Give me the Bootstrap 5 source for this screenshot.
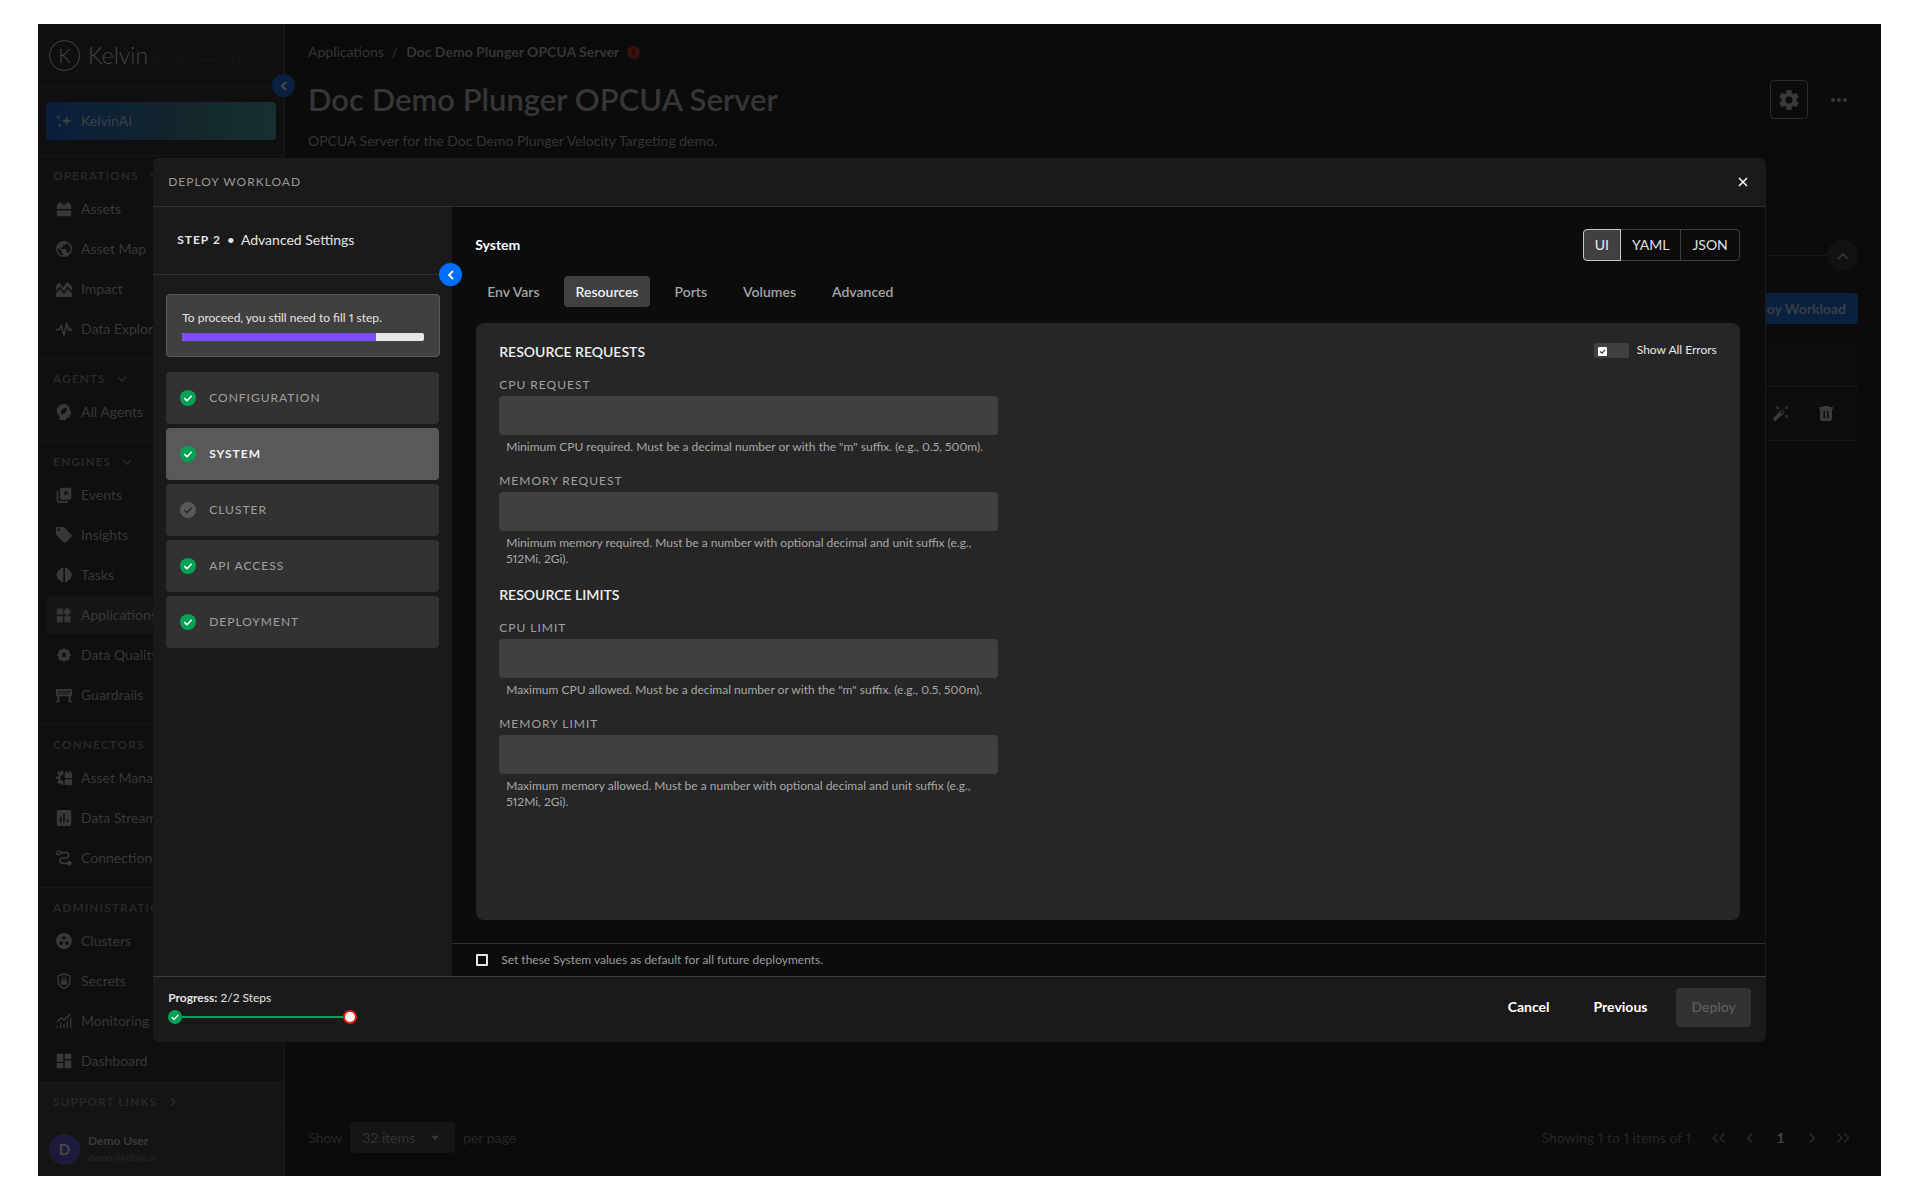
<!DOCTYPE html>
<html lang="en">
<head>
<meta charset="utf-8">
<meta name="viewport" content="width=device-width, initial-scale=1">
<title>Deploy Workload - Kelvin</title>
<link rel="stylesheet" href="https://cdn.jsdelivr.net/npm/bootstrap@5.3.0/dist/css/bootstrap.min.css">
<style>
  body { font-family: Lato, "Open Sans", sans-serif; font-size: 14px; line-height: 20px; font-variant-numeric: proportional-nums; background: #fff; }
  a { color: inherit; text-decoration: none; }
  button { font-size: 14px; line-height: 20px; }
  svg { display: block; flex: none; fill: currentColor; }

  .app-frame { height: calc(100vh - 48px); margin: 24px 39px 24px 38px; background: #0b0b0b; color: #353535; overflow: hidden; }

  /* sidebar */
  .side-nav { width: 247px; background: #0f0f0f; border-right: 1px solid #1a1a1a; }
  .brand-bar { height: 63px; padding: 0 11px; border-bottom: 1px solid #181818; }
  .brand-ring { width: 31px; height: 31px; border: 1px solid #444; border-radius: 50%; font-size: 20px; font-weight: 300; color: #484848; }
  .brand-name { font-size: 23px; font-weight: 300; line-height: 28px; color: #444; }
  .brand-env { font-size: 9px; color: #171717; padding-top: 10px; white-space: nowrap; }
  .ai-wrap { padding: 15px 8px; }
  .ai-link { gap: 9px; height: 38px; padding: 0 10px; border-radius: 4px; background: linear-gradient(90deg, #0a1e3d, #13262b 60%, #17302f); color: #3b4046; }
  .nav-group { border-top: 1px solid #181818; padding: 0 8px 8px; }
  .group-title { height: 34px; padding: 5px 7px 0; font-size: 12px; font-weight: 700; letter-spacing: 1px; color: #282828; }
  .side-link { gap: 9px; height: 38px; margin-bottom: 2px; padding: 0 10px; border-radius: 4px; color: #383838; white-space: nowrap; }
  .side-link.current { background: #151515; }
  .side-foot { background: #141414; border-top: 1px solid #1a1a1a; }
  .support-link { height: 39px; padding: 0 15px; font-size: 12px; font-weight: 700; letter-spacing: 1px; color: #282828; border-bottom: 1px solid #181818; }
  .user-box { height: 54px; padding: 0 11px; font-size: 12px; line-height: 16px; }
  .user-box b { color: #3a3a3a; }
  .user-box small { font-size: 10px; color: #282828; }
  .user-pic { width: 31px; height: 31px; border-radius: 50%; background: linear-gradient(90deg, #20183a, #191d3c); font-size: 15px; font-weight: 700; color: #484848; }
  .round-toggle { position: absolute; width: 23px; height: 23px; right: -10px; padding: 0; border: 0; border-radius: 50%; color: #fff; background: #006fff; }
  .round-toggle.dim { background: #09203f; color: #4a4a4a; top: 50px; right: -11px; }

  /* page behind the dialog */
  .page-body { padding: 18px 23px 23px; }
  .page-title { font-size: 31px; line-height: 39px; font-weight: 600; color: #363636; margin: 0; }
  .title-row { margin-top: 18px; }
  .tool-btn { width: 38px; height: 39px; padding: 0; background: none; border: 1px solid #2a2a2a; border-radius: 4px; color: #3a3a3a; }
  .tool-btn.bare { border: 0; margin-left: 12px; }
  .fold-row { margin-top: 89px; }
  .fold-line { height: 1px; background: #191919; }
  .fold-btn { width: 31px; height: 31px; padding: 0; border: 0; border-radius: 50%; background: #121212; color: #303030; }
  .deploy-open { margin-top: 22px; height: 31px; padding: 0 12px; border: 0; border-radius: 4px; background: #09203f; color: #3a3f47; font-weight: 700; }
  .work-table { margin-top: 19px; background: #0d0d0d; }
  .work-table .t-head { height: 44px; border-bottom: 1px solid #171717; }
  .work-table .t-row { height: 54px; gap: 30px; border-bottom: 1px solid #171717; padding-right: 25px; color: #3a3a3a; }
  .work-table button { background: none; border: 0; padding: 0; color: inherit; }
  .page-size { width: 105px; height: 31px; padding: 0 12px; border: 0; border-radius: 4px; background: #151515; color: #333; appearance: none; }
  .pager { color: #262626; }
  .pager button { width: 31px; padding: 0; border: 0; background: none; color: #262626; }
  .pager .on { color: #444; font-weight: 700; }

  /* dialog */
  .deploy-box { width: 87.5%; height: 76.7%; border-radius: 7px; background: #1a1a1a; color: #e4e4e4; overflow: hidden; }
  .caps { font-size: 12px; line-height: 16px; letter-spacing: 1px; text-transform: uppercase; }
  .box-head { height: 49px; padding: 0 14px 0 15px; border-bottom: 1px solid #303030; color: #989898; }
  .box-head button { width: 18px; height: 20px; padding: 0; border: 0; background: none; color: #fff; }
  .step-side { width: 299px; }
  .step-title { height: 68px; padding: 0 24px 2px; gap: 6px; border-bottom: 1px solid #303030; }
  .step-title .round-toggle { bottom: -12px; }
  .notice { margin: 19px 12px 15px 13px; padding: 15px; background: #404040; border: 1px solid #5c5c5c; border-radius: 4px; font-size: 12px; line-height: 16px; }
  .notice .progress { height: 8px; margin-top: 7px; border-radius: 2px; background: #e6e6e6; }
  .notice .progress-bar { background: #7c4dff; }
  .step-list { gap: 4px; padding: 0 13px; }
  .step-btn { height: 52px; padding: 0 14px; gap: 13px; border: 0; border-radius: 4px; background: #323232; color: #a0a0a0; text-align: left; }
  .step-btn.current { background: #595959; color: #f4f4f4; font-weight: 700; }
  .ok { color: #06a157; --tick: #fff; }
  .idle { color: #595959; --tick: #2c2c2c; }
  .work-side { background: #0c0c0c; border-right: 1px solid #1a1a1a; }
  .work-pad { padding: 22px 25px 23px 23px; }
  .view-switch .btn { --bs-btn-color: #e0e0e0; --bs-btn-border-color: #3f3f3f; --bs-btn-active-bg: #404040; --bs-btn-active-color: #eee; --bs-btn-active-border-color: #c8c8c8; --bs-btn-font-size: 14px; --bs-btn-padding-x: 11px; --bs-btn-padding-y: 0; height: 32px; line-height: 30px; --bs-btn-border-radius: 4px; }
  .tab-row { gap: 12px; margin: 15px 0 16px; }
  .tab-row .nav-link { height: 31px; padding: 0 12px; line-height: 31px; font-weight: 600; color: #a4a4a4; border-radius: 4px; border: 0; background: none; }
  .tab-row .nav-link.active { background: #404040; color: #f0f0f0; }
  .form-card { margin-left: 1px; padding: 19px 23px; border-radius: 8px; background: #262626; }
  .sect { margin: 0 0 15px; font-size: 14px; line-height: 20px; font-weight: 600; color: #efefef; }
  .fields { width: 41%; min-width: 300px; }
  .fields label { display: block; margin-bottom: 3px; color: #a0a0a0; }
  .fields .form-control { height: 39px; border: 0; border-radius: 4px; background: #404040; color: #eee; }
  .hint { margin: 4px 7px 18px; font-size: 12px; line-height: 16px; color: #a8a8a8; }
  .err-switch { gap: 8px; font-size: 12px; line-height: 16px; color: #e8e8e8; }
  .err-switch input { appearance: none; width: 35px; height: 15px; margin: 0; border-radius: 2px; background: #404040 url("data:image/svg+xml,%3Csvg xmlns='http://www.w3.org/2000/svg' viewBox='0 0 9 9'%3E%3Crect width='9' height='9' rx='1' fill='%23fff'/%3E%3Cpath d='M2.2 4.5 4 6.2 7 2.8' fill='none' stroke='%23333' stroke-width='1.1'/%3E%3C/svg%3E") 4px 4px / 9px 9px no-repeat; }
  .default-row { height: 33px; padding: 0 24px; gap: 13px; border-top: 1px solid #303030; font-size: 12px; color: #9c9c9c; }
  .default-row input { appearance: none; width: 12px; height: 12px; margin: 0; border: 2px solid #e4e4e4; border-radius: 1px; }
  .box-foot { height: 66px; padding: 0 15px 4px; border-top: 1px solid #3c3c3c; }
  .done-line { width: 189px; font-size: 12px; line-height: 16px; }
  .track { height: 2px; background: #06a157; }
  .dot-open { width: 14px; height: 14px; border: 2px solid #e0200c; border-radius: 50%; background: #fff; }
  .foot-btn { height: 39px; padding: 0 22px; border: 0; border-radius: 4px; background: none; color: #fff; font-weight: 700; }
  .foot-btn:disabled { margin-left: 7px; padding: 0 15px; background: #323232; color: #5c5c5c; font-weight: 600; }
</style>
</head>
<body>

<svg width="0" height="0" class="position-absolute" aria-hidden="true">
  <symbol id="i-spark" viewBox="0 0 24 24"><path d="M16 4l2 6 6 2-6 2-2 6-2-6-6-2 6-2zM3.500 3l.9 2.600 2.600.9-2.600.9-.9 2.600-.9-2.600L0 6.500l2.600-.9zM5.500 15l1 2.500 2.500 1-2.500 1-1 2.500-1-2.500-2.500-1 2.500-1z"/></symbol>
  <symbol id="i-assets" viewBox="1 1 22 22"><path d="M2 12V8a2 2 0 0 1 2-2V5a2 2 0 0 1 2-2h2a2 2 0 0 1 2 2v1h4V5a2 2 0 0 1 2-2h2a2 2 0 0 1 2 2v1a2 2 0 0 1 2 2v4zM2 14h20v6a2 2 0 0 1-2 2H4a2 2 0 0 1-2-2z"/></symbol>
  <symbol id="i-globe" viewBox="2 2 20 20"><path d="M17.900,17.390C17.640,16.590 16.890,16 16,16H15V13A1,1 0 0,0 14,12H8V10H10A1,1 0 0,0 11,9V7H13A2,2 0 0,0 15,5V4.590C17.930,5.770 20,8.640 20,12C20,14.080 19.200,15.970 17.900,17.390M11,19.930C7.050,19.440 4,16.080 4,12C4,11.380 4.080,10.780 4.210,10.210L9,15V16A2,2 0 0,0 11,18M12,2A10,10 0 0,0 2,12A10,10 0 0,0 12,22A10,10 0 0,0 22,12A10,10 0 0,0 12,2Z"/></symbol>
  <symbol id="i-impact" viewBox="2 2 20 20"><path d="M2 8l4-4 5 6 5-7 6 6v5l-6-5-4 6-5-6-5 5zM2 17l5-5 5 6 4-6 6 5v5H2z"/></symbol>
  <symbol id="i-pulse" viewBox="0 0 24 24"><path d="M0 13h5l3-6 4 15 4-19 3 11 2-3 3 4" fill="none" stroke="currentColor" stroke-width="2.400"/></symbol>
  <symbol id="i-agent" viewBox="1 1 22 22"><path fill-rule="evenodd" d="M12 1C6 1 2 5 2 10.500c0 3.500 2 6 4 7.500v5h9v-3h3c1.500 0 2-1 2-2v-3h2.500L20 9c0-5-4-8-8-8zM8 15c-1-5 2-9 8-9 0 5-2 9-8 9z"/></symbol>
  <symbol id="i-events" viewBox="0 0 24 24"><path fill-rule="evenodd" d="M8 1h13a2 2 0 0 1 2 2v14a2 2 0 0 1-2 2H8a2 2 0 0 1-2-2V3a2 2 0 0 1 2-2zm7 4l-1.200 3H11l2.300 2-1 3.200L15 11.400l2.700 1.800-1-3.200L19 8h-2.800zM1 6h2.500v14c0 .8.300 1 1 1H18v2.500H3.500C2 23.500 1 22.500 1 21z"/></symbol>
  <symbol id="i-tag" viewBox="2 2 20 20"><path d="M21.410 11.580l-9-9C12.050 2.220 11.550 2 11 2H4c-1.100 0-2 .9-2 2v7c0 .55.220 1.050.590 1.420l9 9c.36.36.86.58 1.410.58s1.050-.22 1.410-.59l7-7c.37-.36.59-.86.59-1.410s-.23-1.060-.59-1.420zM5.500 7C4.670 7 4 6.330 4 5.500S4.670 4 5.500 4 7 4.670 7 5.500 6.330 7 5.500 7z"/></symbol>
  <symbol id="i-tasks" viewBox="0 0 24 24"><path d="M11 1v22H8l-1-2-4-3-2-4v-4l2-4 4-3 1-2zM13.500 1v22h3l1-2 4-3 2-4v-4l-2-4-4-3-1-2z"/></symbol>
  <symbol id="i-apps" viewBox="2 1 21 21"><path d="M13 13v8h8v-8h-8zM3 21h8v-8H3v8zM3 3v8h8V3H3zm13.660-1.310L11 7.340 16.660 13l5.660-5.660-5.660-5.650z"/></symbol>
  <symbol id="i-quality" viewBox="0 0 24 24"><path fill-rule="evenodd" d="M12 1l3 3h5v5l3 3-3 3v5h-5l-3 3-3-3H4v-5l-3-3 3-3V4h5zm0 6l-1.300 3.300H7.300l2.700 2.200-1 3.500 3-2 3 2-1-3.500 2.700-2.200h-3.400z"/></symbol>
  <symbol id="i-guard" viewBox="0 0 24 24"><path fill-rule="evenodd" d="M0 3h24v11h-2v7h2v2h-6v-2h1v-7H5v7h1v2H0v-2h2v-7H0zM2 11l6-6H6L2 9zm4 1l7-7h-2l-7 7zm5 0l7-7h-2l-7 7zm5 0l6-6V5h-1l-7 7z"/></symbol>
  <symbol id="i-manager" viewBox="0 0 24 24"><path d="M11 1v6.500a4.500 4.500 0 0 0 0 9V23H8l-1-3-3 1-2-3 2-2-1-3H0v-3h3l1-3-2-2 2-3 3 1 1-2zM13 12V5h1V2h3v2h3V2h3v3h1v7zM13 14h11v9H13z"/></symbol>
  <symbol id="i-stream" viewBox="1 1 22 22"><path d="M19 1H5C3 1 2 2 2 4v16c0 2 1 3 3 3h14c2 0 3-1 3-3V4c0-2-1-3-3-3zM8.500 18h-2v-8h2zm4.500 0h-2V6h2zm5 0h-2v-4h2z"/></symbol>
  <symbol id="i-route" viewBox="0 0 24 24"><path d="M6 4h9a4 4 0 0 1 0 8H10a4 4 0 0 0 0 8h9" fill="none" stroke="currentColor" stroke-width="2.400"/><circle cx="4" cy="4" r="2.800" fill="none" stroke="currentColor" stroke-width="2"/><circle cx="20" cy="20" r="3.600"/></symbol>
  <symbol id="i-cluster" viewBox="1 1 22 22"><path d="M12 1a11 11 0 1 0 0 22 11 11 0 0 0 0-22zM8 17.500c-1.380 0-2.500-1.120-2.500-2.500s1.120-2.500 2.500-2.500 2.500 1.120 2.500 2.500-1.120 2.500-2.500 2.500zM9.500 8c0-1.380 1.120-2.500 2.500-2.500s2.500 1.120 2.500 2.500-1.120 2.500-2.500 2.500S9.500 9.380 9.500 8zm6.500 9.500c-1.380 0-2.500-1.120-2.500-2.500s1.120-2.500 2.500-2.500 2.500 1.120 2.500 2.500-1.120 2.500-2.500 2.500z"/></symbol>
  <symbol id="i-shield" viewBox="1 1 22 22"><path d="M12 2l8 3v7c0 5-3.500 8.500-8 10-4.500-1.500-8-5-8-10V5z" fill="none" stroke="currentColor" stroke-width="2"/><path fill-rule="evenodd" d="M8 11h1V9.500a3 3 0 0 1 6 0V11h1v6H8zm2.500 0h3V9.500a1.500 1.500 0 0 0-3 0z"/></symbol>
  <symbol id="i-monitor" viewBox="0 0 24 24"><path d="M1 14l7-7 4 4L22 1" fill="none" stroke="currentColor" stroke-width="2.200"/><path d="M1 19h2v4H1zM6 14h2v9H6zM11 16h2v7h-2zM16 12h2v11h-2zM21 7h2v16h-2z"/></symbol>
  <symbol id="i-dash" viewBox="0 0 24 24"><path d="M1 13h10V1H1v12zm0 10h10v-8H1v8zm12 0h10V11H13v12zm0-22v8h10V1H13z"/></symbol>
  <symbol id="i-gear" viewBox="2 2 20 20"><path d="M12,15.500A3.500,3.500 0 0,1 8.500,12A3.500,3.500 0 0,1 12,8.500A3.500,3.500 0 0,1 15.500,12A3.500,3.500 0 0,1 12,15.500M19.430,12.970C19.470,12.650 19.500,12.330 19.500,12C19.500,11.670 19.470,11.340 19.430,11L21.540,9.370C21.730,9.220 21.780,8.950 21.660,8.730L19.660,5.270C19.540,5.050 19.270,4.960 19.050,5.050L16.560,6.050C16.040,5.660 15.500,5.320 14.870,5.070L14.500,2.420C14.460,2.180 14.250,2 14,2H10C9.750,2 9.540,2.180 9.500,2.420L9.130,5.070C8.500,5.320 7.960,5.660 7.440,6.050L4.950,5.050C4.730,4.960 4.460,5.050 4.340,5.270L2.340,8.730C2.210,8.950 2.270,9.220 2.460,9.370L4.570,11C4.530,11.340 4.500,11.670 4.500,12C4.500,12.330 4.530,12.650 4.570,12.970L2.460,14.630C2.270,14.780 2.210,15.050 2.340,15.270L4.340,18.730C4.460,18.950 4.730,19.030 4.950,18.950L7.440,17.940C7.960,18.340 8.500,18.680 9.130,18.930L9.500,21.580C9.540,21.820 9.750,22 10,22H14C14.250,22 14.460,21.820 14.500,21.580L14.870,18.930C15.500,18.670 16.040,18.340 16.560,17.940L19.050,18.950C19.270,19.030 19.540,18.950 19.660,18.730L21.660,15.270C21.780,15.050 21.730,14.780 21.540,14.630L19.430,12.970Z"/></symbol>
  <symbol id="i-dots" viewBox="0 0 16 4"><circle cx="2" cy="2" r="1.900"/><circle cx="8" cy="2" r="1.900"/><circle cx="14" cy="2" r="1.900"/></symbol>
  <symbol id="i-wand" viewBox="0 1 23 23"><path d="M7.500,5.600L5,7L6.400,4.500L5,2L7.500,3.400L10,2L8.600,4.500L10,7L7.500,5.600M19.500,15.400L22,14L20.600,16.500L22,19L19.500,17.600L17,19L18.400,16.500L17,14L19.500,15.400M22,2L20.600,4.500L22,7L19.500,5.600L17,7L18.400,4.500L17,2L19.500,3.400L22,2M13.340,12.780L15.780,10.340L13.660,8.220L11.220,10.660L13.340,12.780M14.370,7.290L16.710,9.630C17.100,10 17.100,10.650 16.710,11.040L5.040,22.710C4.650,23.100 4,23.100 3.630,22.710L1.290,20.370C0.900,20 0.900,19.350 1.290,18.960L12.960,7.290C13.350,6.900 14,6.900 14.370,7.290Z"/></symbol>
  <symbol id="i-trash" viewBox="0 0 14 15"><path fill-rule="evenodd" d="M4 0h6v1h4v2H0V1h4zM1 3h12v10c0 1.300-.7 2-2 2H3c-1.300 0-2-.7-2-2zm3.500 2v7H6V5zM8 5v7h1.500V5z"/></symbol>
  <symbol id="i-left" viewBox="0 0 16 16"><path d="M10 4L6 8l4 4" fill="none" stroke="currentColor" stroke-width="1.800"/></symbol>
  <symbol id="i-right" viewBox="0 0 16 16"><path d="M6 4l4 4-4 4" fill="none" stroke="currentColor" stroke-width="1.600"/></symbol>
  <symbol id="i-down" viewBox="0 0 16 16"><path d="M4 6l4 4 4-4" fill="none" stroke="currentColor" stroke-width="1.600"/></symbol>
  <symbol id="i-up" viewBox="0 0 16 16"><path d="M3 11l5-5 5 5" fill="none" stroke="currentColor" stroke-width="2.200"/></symbol>
  <symbol id="i-first" viewBox="0 0 16 16"><path d="M7 4L3 8l4 4M13 4L9 8l4 4" fill="none" stroke="currentColor" stroke-width="1.500"/></symbol>
  <symbol id="i-last" viewBox="0 0 16 16"><path d="M3 4l4 4-4 4M9 4l4 4-4 4" fill="none" stroke="currentColor" stroke-width="1.500"/></symbol>
  <symbol id="i-close" viewBox="0 0 10 10"><path d="M1 1l8 8M9 1L1 9" fill="none" stroke="currentColor" stroke-width="1.500"/></symbol>
  <symbol id="i-check" viewBox="0 0 16 16"><circle cx="8" cy="8" r="8"/><path d="M4.300 8.200L7 10.700l4.700-4.900" fill="none" style="stroke: var(--tick)" stroke-width="1.600"/></symbol>
</svg>

<div class="app-frame d-flex position-relative">

  <aside class="side-nav d-flex flex-column flex-shrink-0 position-relative">
    <div class="brand-bar d-flex align-items-center">
      <div class="brand-ring d-flex align-items-center justify-content-center">K</div>
      <span class="brand-name ps-2">Kelvin</span>
      <span class="brand-env ms-1">BETA Environment (DEV)</span>
    </div>
    <button class="round-toggle dim d-flex align-items-center justify-content-center" aria-label="Collapse menu"><svg width="16" height="16"><use href="#i-left"/></svg></button>
    <div class="ai-wrap">
      <a href="#" class="ai-link d-flex align-items-center"><svg width="16" height="16"><use href="#i-spark"/></svg>KelvinAI</a>
    </div>

    <nav class="flex-grow-1">
      <div class="nav-group">
        <div class="group-title d-flex align-items-center gap-2">OPERATIONS <svg width="16" height="16"><use href="#i-down"/></svg></div>
        <a href="#" class="side-link d-flex align-items-center"><svg width="16" height="16"><use href="#i-assets"/></svg>Assets</a>
        <a href="#" class="side-link d-flex align-items-center"><svg width="16" height="16"><use href="#i-globe"/></svg>Asset Map</a>
        <a href="#" class="side-link d-flex align-items-center"><svg width="16" height="16"><use href="#i-impact"/></svg>Impact</a>
        <a href="#" class="side-link d-flex align-items-center"><svg width="16" height="16"><use href="#i-pulse"/></svg>Data Explorer</a>
      </div>
      <div class="nav-group">
        <div class="group-title d-flex align-items-center gap-2">AGENTS <svg width="16" height="16"><use href="#i-down"/></svg></div>
        <a href="#" class="side-link d-flex align-items-center"><svg width="16" height="16"><use href="#i-agent"/></svg>All Agents</a>
      </div>
      <div class="nav-group">
        <div class="group-title d-flex align-items-center gap-2">ENGINES <svg width="16" height="16"><use href="#i-down"/></svg></div>
        <a href="#" class="side-link d-flex align-items-center"><svg width="16" height="16"><use href="#i-events"/></svg>Events</a>
        <a href="#" class="side-link d-flex align-items-center"><svg width="16" height="16"><use href="#i-tag"/></svg>Insights</a>
        <a href="#" class="side-link d-flex align-items-center"><svg width="16" height="16"><use href="#i-tasks"/></svg>Tasks</a>
        <a href="#" class="side-link current d-flex align-items-center"><svg width="16" height="16"><use href="#i-apps"/></svg>Applications</a>
        <a href="#" class="side-link d-flex align-items-center"><svg width="16" height="16"><use href="#i-quality"/></svg>Data Quality</a>
        <a href="#" class="side-link d-flex align-items-center"><svg width="16" height="16"><use href="#i-guard"/></svg>Guardrails</a>
      </div>
      <div class="nav-group">
        <div class="group-title d-flex align-items-center">CONNECTORS</div>
        <a href="#" class="side-link d-flex align-items-center"><svg width="16" height="16"><use href="#i-manager"/></svg>Asset Manager</a>
        <a href="#" class="side-link d-flex align-items-center"><svg width="16" height="16"><use href="#i-stream"/></svg>Data Streams</a>
        <a href="#" class="side-link d-flex align-items-center"><svg width="16" height="16"><use href="#i-route"/></svg>Connections</a>
      </div>
      <div class="nav-group pb-0">
        <div class="group-title d-flex align-items-center">ADMINISTRATION</div>
        <a href="#" class="side-link d-flex align-items-center"><svg width="16" height="16"><use href="#i-cluster"/></svg>Clusters</a>
        <a href="#" class="side-link d-flex align-items-center"><svg width="16" height="16"><use href="#i-shield"/></svg>Secrets</a>
        <a href="#" class="side-link d-flex align-items-center"><svg width="16" height="16"><use href="#i-monitor"/></svg>Monitoring</a>
        <a href="#" class="side-link mb-0 d-flex align-items-center"><svg width="16" height="16"><use href="#i-dash"/></svg>Dashboard</a>
      </div>
    </nav>

    <div class="side-foot">
      <a href="#" class="support-link d-flex align-items-center gap-2">SUPPORT LINKS <svg width="16" height="16"><use href="#i-right"/></svg></a>
      <div class="user-box d-flex align-items-center gap-2">
        <div class="user-pic d-flex align-items-center justify-content-center">D</div>
        <div class="d-flex flex-column"><b>Demo User</b><small>demo@kelvin.ai</small></div>
      </div>
    </div>
  </aside>

  <main class="page-body flex-grow-1 d-flex flex-column">
    <div class="d-flex align-items-center">
      <a href="#">Applications</a><span class="px-2">/</span><b>Doc Demo Plunger OPCUA Server</b>
      <svg class="ms-2" width="13" height="13" viewBox="0 0 13 13"><circle cx="6.500" cy="6.500" r="6.500" fill="#3a0f0c"/><path d="M6.500 3v4.500M6.500 8.700V10" stroke="#0b0b0b" stroke-width="1.400"/></svg>
    </div>
    <div class="title-row d-flex align-items-center">
      <h1 class="page-title flex-grow-1">Doc Demo Plunger OPCUA Server</h1>
      <button class="tool-btn d-flex align-items-center justify-content-center" aria-label="Settings"><svg width="20" height="20"><use href="#i-gear"/></svg></button>
      <button class="tool-btn bare d-flex align-items-center justify-content-center" aria-label="More"><svg width="16" height="4"><use href="#i-dots"/></svg></button>
    </div>
    <div class="mt-2 pt-1">OPCUA Server for the Doc Demo Plunger Velocity Targeting demo.</div>
    <div class="fold-row d-flex align-items-center">
      <div class="fold-line flex-grow-1"></div>
      <button class="fold-btn d-flex align-items-center justify-content-center" aria-label="Fold section"><svg width="16" height="16"><use href="#i-up"/></svg></button>
    </div>
    <button class="deploy-open align-self-end">Deploy Workload</button>
    <div class="work-table">
      <div class="t-head"></div>
      <div class="t-row d-flex align-items-center justify-content-end">
        <button aria-label="Edit"><svg width="17" height="17"><use href="#i-wand"/></svg></button>
        <button aria-label="Delete"><svg width="14" height="15"><use href="#i-trash"/></svg></button>
      </div>
    </div>
    <div class="d-flex align-items-center mt-auto pager">
      <label for="page-size">Show</label>
      <div class="position-relative mx-2">
        <select id="page-size" class="page-size"><option>32 items</option></select>
        <svg class="position-absolute top-50 end-0 translate-middle-y me-3" width="8" height="5"><path d="M0 0h8L4 5z" fill="#333"/></svg>
      </div>
      <span class="flex-grow-1">per page</span>
      <span class="me-2 pe-1">Showing 1 to 1 items of 1</span>
      <button aria-label="First"><svg class="mx-auto" width="18" height="18"><use href="#i-first"/></svg></button>
      <button aria-label="Previous page"><svg class="mx-auto" width="18" height="18"><use href="#i-left"/></svg></button>
      <button class="on">1</button>
      <button aria-label="Next page"><svg class="mx-auto" width="18" height="18"><use href="#i-right"/></svg></button>
      <button aria-label="Last"><svg class="mx-auto" width="18" height="18"><use href="#i-last"/></svg></button>
    </div>
  </main>

  <div class="position-absolute top-0 start-0 w-100 h-100 d-flex align-items-center justify-content-center">
    <section class="deploy-box d-flex flex-column" role="dialog" aria-label="Deploy Workload">
      <header class="box-head d-flex align-items-center justify-content-between">
        <span class="caps">Deploy Workload</span>
        <button class="d-flex align-items-center justify-content-center" aria-label="Close"><svg width="10" height="10"><use href="#i-close"/></svg></button>
      </header>

      <div class="d-flex flex-grow-1">
        <div class="step-side flex-shrink-0 position-relative z-1">
          <div class="step-title position-relative d-flex align-items-center">
            <b class="caps">Step 2</b><span>•</span><span>Advanced Settings</span>
            <button class="round-toggle d-flex align-items-center justify-content-center" aria-label="Collapse steps"><svg width="16" height="16"><use href="#i-left"/></svg></button>
          </div>
          <div class="notice">
            To proceed, you still need to fill 1 step.
            <div class="progress"><div class="progress-bar" style="width: 80%"></div></div>
          </div>
          <div class="step-list d-flex flex-column">
            <button class="step-btn caps d-flex align-items-center"><svg class="ok" width="16" height="16"><use href="#i-check"/></svg>Configuration</button>
            <button class="step-btn caps current d-flex align-items-center"><svg class="ok" width="16" height="16"><use href="#i-check"/></svg>System</button>
            <button class="step-btn caps d-flex align-items-center"><svg class="idle" width="16" height="16"><use href="#i-check"/></svg>Cluster</button>
            <button class="step-btn caps d-flex align-items-center"><svg class="ok" width="16" height="16"><use href="#i-check"/></svg>API Access</button>
            <button class="step-btn caps d-flex align-items-center"><svg class="ok" width="16" height="16"><use href="#i-check"/></svg>Deployment</button>
          </div>
        </div>

        <div class="work-side flex-grow-1 d-flex flex-column">
          <div class="work-pad flex-grow-1 d-flex flex-column">
            <div class="d-flex align-items-center justify-content-between">
              <b class="text-white">System</b>
              <div class="btn-group view-switch">
                <button class="btn active">UI</button>
                <button class="btn">YAML</button>
                <button class="btn">JSON</button>
              </div>
            </div>
            <div class="nav tab-row">
              <button class="nav-link">Env Vars</button>
              <button class="nav-link active">Resources</button>
              <button class="nav-link">Ports</button>
              <button class="nav-link">Volumes</button>
              <button class="nav-link">Advanced</button>
            </div>
            <form class="form-card flex-grow-1 d-flex justify-content-between align-items-start">
              <div class="fields">
                <h2 class="sect">RESOURCE REQUESTS</h2>
                <label class="caps" for="cpu-req">CPU Request</label>
                <input id="cpu-req" class="form-control">
                <div class="hint">Minimum CPU required. Must be a decimal number or with the "m" suffix. (e.g., 0.5, 500m).</div>
                <label class="caps" for="mem-req">Memory Request</label>
                <input id="mem-req" class="form-control">
                <div class="hint">Minimum memory required. Must be a number with optional decimal and unit suffix (e.g., 512Mi, 2Gi).</div>
                <h2 class="sect">RESOURCE LIMITS</h2>
                <label class="caps" for="cpu-lim">CPU Limit</label>
                <input id="cpu-lim" class="form-control">
                <div class="hint">Maximum CPU allowed. Must be a decimal number or with the "m" suffix. (e.g., 0.5, 500m).</div>
                <label class="caps" for="mem-lim">Memory Limit</label>
                <input id="mem-lim" class="form-control">
                <div class="hint">Maximum memory allowed. Must be a number with optional decimal and unit suffix (e.g., 512Mi, 2Gi).</div>
              </div>
              <label class="err-switch d-flex align-items-center"><input type="checkbox" role="switch">Show All Errors</label>
            </form>
          </div>
          <label class="default-row d-flex align-items-center"><input type="checkbox">Set these System values as default for all future deployments.</label>
        </div>
      </div>

      <footer class="box-foot d-flex align-items-center">
        <div class="done-line me-auto">
          <b>Progress:</b> 2/2 Steps
          <div class="d-flex align-items-center mt-1">
            <svg class="ok" width="14" height="14"><use href="#i-check"/></svg>
            <div class="track flex-grow-1"></div>
            <div class="dot-open"></div>
          </div>
        </div>
        <button class="foot-btn">Cancel</button>
        <button class="foot-btn">Previous</button>
        <button class="foot-btn" disabled>Deploy</button>
      </footer>
    </section>
  </div>
</div>

<script src="https://cdn.jsdelivr.net/npm/bootstrap@5.3.0/dist/js/bootstrap.bundle.min.js"></script>
</body>
</html>
